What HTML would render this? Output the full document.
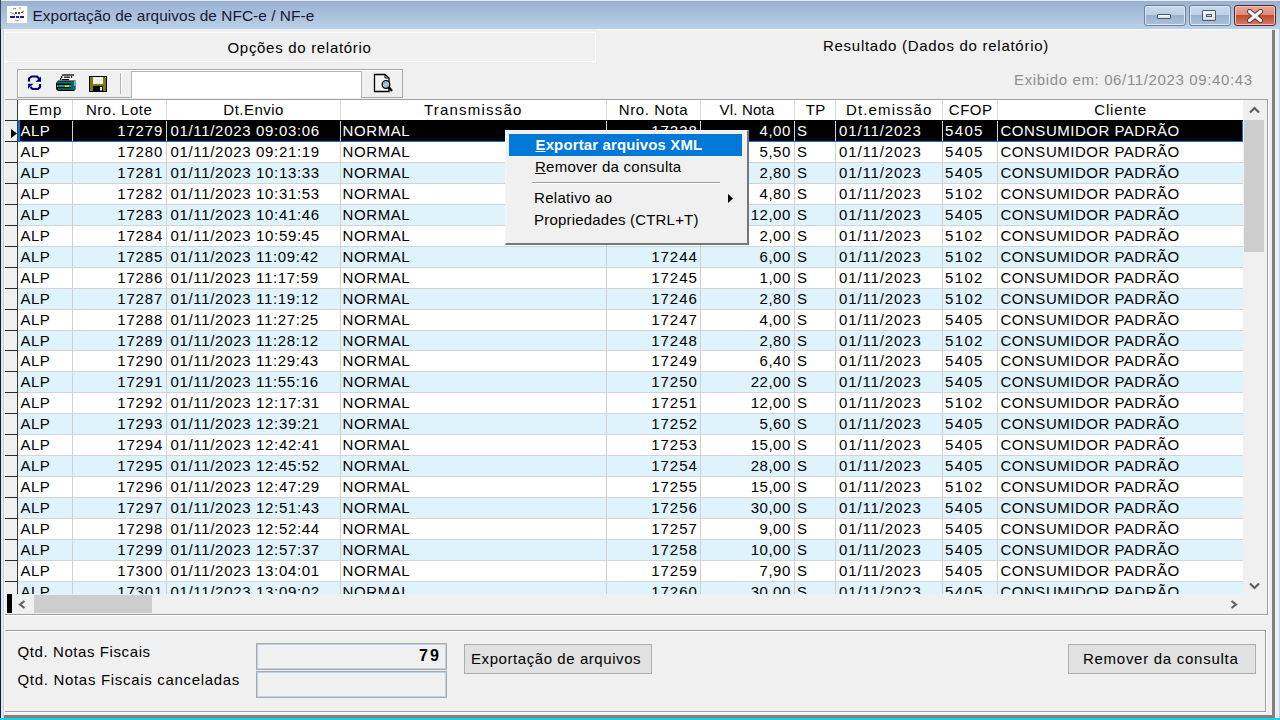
<!DOCTYPE html>
<html><head><meta charset="utf-8"><style>
*{margin:0;padding:0;box-sizing:border-box}
html,body{width:1280px;height:720px;overflow:hidden;background:#f0f0f0;font-family:"Liberation Sans",sans-serif;position:relative}
.a{position:absolute}
.t{position:absolute;white-space:nowrap;line-height:20px;color:#000}
#title{position:absolute;left:0;top:0;width:1280px;height:29px;background:linear-gradient(#97b0ce,#b9d1ea)}
.tb{position:absolute;top:5px;width:42px;height:21px;border:1px solid #6e7f93;border-radius:3px;background:linear-gradient(#c6d8ec 0,#bcd0e7 45%,#98b1cd 50%,#a9c1dc 100%);box-shadow:inset 0 0 0 1px #dfe9f5}
.tb.cl{border-color:#5a2630;background:linear-gradient(#e8a697 0,#dd8d7b 45%,#c24a2d 50%,#d57a63 100%);box-shadow:inset 0 0 0 1px #f0c0b0}
.c{position:absolute;height:20px;line-height:20px;font-size:15px;color:#000;white-space:nowrap}
.c.sel{color:#fff}
.k0{letter-spacing:0.450px;transform:translateX(-0.50px)}
.h0{letter-spacing:1.000px;transform:translateX(0.30px)}
.k1{letter-spacing:0.825px;transform:translateX(0.10px)}
.h1{letter-spacing:0.515px;transform:translateX(-0.35px)}
.k2{letter-spacing:0.672px;transform:translateX(0.50px)}
.h2{letter-spacing:0.486px;transform:translateX(0.14px)}
.k3{letter-spacing:0.600px;transform:translateX(-1.50px)}
.h3{letter-spacing:1.200px;transform:translateX(-0.25px)}
.k4{letter-spacing:0.950px;transform:translateX(0.75px)}
.h4{letter-spacing:0.575px;transform:translateX(-0.06px)}
.k5{letter-spacing:0.533px;transform:translateX(-0.17px)}
.h5{letter-spacing:0.200px;transform:translateX(-0.50px)}
.k6{letter-spacing:2.000px;transform:translateX(-1.00px)}
.h6{letter-spacing:0.300px;transform:translateX(0.60px)}
.k7{letter-spacing:0.867px;transform:translateX(-0.00px)}
.h7{letter-spacing:1.143px;transform:translateX(0.22px)}
.k8{letter-spacing:1.366px;transform:translateX(-1.00px)}
.h8{letter-spacing:0.533px;transform:translateX(0.67px)}
.k9{letter-spacing:0.511px;transform:translateX(-0.50px)}
.h9{letter-spacing:0.867px;transform:translateX(0.08px)}
.hc{position:absolute;top:100px;height:20px;line-height:20px;font-size:15px;color:#000;text-align:center;white-space:nowrap}
#gridclip{position:absolute;left:0;top:0;width:1243px;height:594px;overflow:hidden}
.hdr{position:absolute;left:18px;top:100px;width:1225px;height:20px;background:#fff}
.hsep{position:absolute;top:100px;width:1px;height:20px;background:#dadada}
.row{position:absolute;left:18px;width:1225px}
.rsep{position:absolute;left:18px;width:1225px;height:1px;background:#d4d4d4}
.isep{position:absolute;left:5px;width:13px;height:1px;background:#2a2a2a}
.vsep{position:absolute;top:121px;width:1px;height:480px;background:#d0d0d0}
.menu{position:absolute;left:505px;top:130px;width:244px;height:115px;background:#f0f0f0;border-left:1px solid #f4f4f4;border-top:1px solid #f4f4f4;border-right:2px solid #777;border-bottom:2px solid #777}
.btn{position:absolute;height:30px;background:#e1e1e1;border:1px solid #adadad}
.ed{position:absolute;left:256px;width:191px;height:27px;border:1px solid #a9a9a9;background:#f0f0f0;box-shadow:inset 0 0 0 1px #bcd2ea}
</style></head><body>
<div class="a" style="left:0;top:0;width:1px;height:720px;background:#1a1a1a"></div>
<div class="a" style="left:1px;top:0;width:2px;height:720px;background:#dfe7f0"></div>
<div class="a" style="left:3px;top:0;width:1px;height:720px;background:#b9d1ea"></div>
<div class="a" style="left:1279px;top:0;width:1px;height:720px;background:#b9d1ea"></div>
<div id="title"></div>
<div class="a" style="left:0;top:0;width:1280px;height:1px;background:#e6ebf1"></div>
<div class="a" style="left:0;top:0;width:1px;height:29px;background:#3a4a5a"></div>
<div class="a" style="left:7px;top:6px;width:20px;height:17px;background:#fff;box-shadow:1px 1px 0 #c8ccd2">
 <svg width="20" height="17" viewBox="0 0 20 17" style="position:absolute;left:0;top:0">
  <g fill="none" stroke="#555" stroke-width="0.7"><path d="M6 3 l2 -1 l1 1 M12 2 l2 0 M3 6 l2 1 l3 2 M15 6 l2 -1"/></g>
  <g fill="#444"><rect x="8" y="6" width="2" height="2"/><rect x="11" y="6" width="2" height="2"/><rect x="14" y="6" width="2" height="1"/></g>
  <g fill="#1a1aa0"><rect x="3" y="10" width="5" height="2"/><rect x="9" y="10" width="3" height="2"/><rect x="13" y="10" width="4" height="2"/></g>
  <path d="M8 14 l2 1 l2 -1" stroke="#666" stroke-width="0.7" fill="none"/>
 </svg>
</div>
<div class="t" id="ttl" style="left:32.50px;top:6px;font-size:15.4px;letter-spacing:0.054px;color:#1c1830">Exportação de arquivos de NFC-e / NF-e</div>
<div class="tb" style="left:1144px"><div class="a" style="left:12px;top:8px;width:14px;height:5px;background:linear-gradient(#fff,#d8d8d8);border:1px solid #4d5866;border-radius:1px"></div></div>
<div class="tb" style="left:1189px"><div class="a" style="left:12px;top:4px;width:14px;height:11px;background:linear-gradient(#fff,#d8d8d8);border:1px solid #4d5866;border-radius:1px"><div class="a" style="left:3px;top:3px;width:6px;height:3px;border:1px solid #4d5866;background:#c4d6ec"></div></div></div>
<div class="tb cl" style="left:1234px"><svg class="a" style="left:11px;top:3px" width="18" height="14" viewBox="0 0 18 14"><path d="M3.5 2.5 L14.5 11.5 M14.5 2.5 L3.5 11.5" stroke="#4a3a40" stroke-width="5" stroke-linecap="round"/><path d="M3.5 2.5 L14.5 11.5 M14.5 2.5 L3.5 11.5" stroke="#f4f4f4" stroke-width="3.2" stroke-linecap="round"/></svg></div>

<div class="a" style="left:4px;top:32px;width:592px;height:1px;background:#fff"></div>
<div class="a" style="left:595px;top:32px;width:1px;height:30px;background:#fff"></div>
<div class="a" style="left:4px;top:61px;width:592px;height:1px;background:#fff"></div>
<div class="a" style="left:597px;top:29px;width:676px;height:1px;background:#fff"></div>
<div class="a" style="left:1272px;top:30px;width:3px;height:688px;background:#808080"></div>
<div class="a" style="left:4px;top:715px;width:1271px;height:3px;background:#808080"></div>
<div class="a" style="left:4px;top:29px;width:1px;height:686px;background:#fff"></div>
<div class="a" style="left:0;top:718px;width:1280px;height:2px;background:#22cbe0"></div>
<div class="t" id="tab1" style="left:227.50px;top:38px;font-size:15px;letter-spacing:0.693px;">Opções do relatório</div>
<div class="t" id="tab2" style="left:823.00px;top:36px;font-size:15px;letter-spacing:0.724px;">Resultado (Dados do relatório)</div>

<div class="a" style="left:17px;top:69px;width:386px;height:29px;border:1px solid #a9a9a9;background:#f0f0f0;box-shadow:inset 1px 1px 0 #fff"></div>
<svg class="a" style="left:24px;top:71px" width="22" height="22" viewBox="0 0 22 22">
 <polyline points="5,10.5 5,7.5 7.5,5.5 13,5.5 15,7.5" fill="none" stroke="#000080" stroke-width="2.2" stroke-linejoin="round"/>
 <path d="M11.5 10.7 L17 10.7 L17 5.5 Z" fill="#000080"/>
 <polyline points="16,13 16,16 14,18 8.5,18 6.5,16" fill="none" stroke="#000080" stroke-width="2.2" stroke-linejoin="round"/>
 <path d="M4 12.7 L9.5 12.7 L4 17.8 Z" fill="#000080"/>
</svg>
<svg class="a" style="left:55px;top:73px" width="22" height="19" viewBox="0 0 22 19">
 <rect x="7" y="1" width="12" height="2" fill="#5a5a5a"/>
 <path d="M6.5 3 H18 V7.5 H4 Z" fill="#fff"/>
 <rect x="6" y="3" width="1.3" height="2" fill="#000"/>
 <rect x="5" y="5" width="1.3" height="2" fill="#000"/>
 <rect x="9" y="3.6" width="6" height="1.2" fill="#000"/>
 <rect x="7" y="6" width="7" height="1.2" fill="#000"/>
 <rect x="16" y="3" width="1.2" height="2" fill="#222"/>
 <path d="M2 9 L3 7.5 H20.5 V16.5 L19 18 H3 L1 16 V10 Z" fill="#000"/>
 <rect x="2" y="8.5" width="14" height="2" fill="#007575"/>
 <rect x="2" y="12" width="14" height="2" fill="#00a0a0"/>
 <rect x="10" y="12.5" width="4" height="1.5" fill="#e8e800"/>
 <rect x="3" y="15" width="13" height="2" fill="#005c5c"/>
 <rect x="16" y="8" width="4" height="9" fill="#006a6a"/>
 <rect x="19" y="8" width="1.5" height="5" fill="#5cc8c8"/>
</svg>
<svg class="a" style="left:89px;top:76px" width="18" height="16" viewBox="0 0 18 16">
 <rect x="0.5" y="0.5" width="17" height="15" fill="#7d7d00" stroke="#000" stroke-width="1"/>
 <rect x="4" y="1" width="10" height="7" fill="#efefef"/>
 <rect x="4" y="10" width="10" height="5.5" fill="#000"/>
 <rect x="11" y="11" width="2" height="3.5" fill="#e8e8e8"/>
 <rect x="16" y="1" width="1" height="1" fill="#fff"/>
</svg>
<div class="a" style="left:120px;top:73px;width:1px;height:21px;background:#b4b4b4"></div>
<div class="a" style="left:121px;top:73px;width:1px;height:21px;background:#fff"></div>
<div class="a" style="left:131px;top:71px;width:231px;height:27px;background:#fff;border:1px solid #b4b4b4;border-bottom:none"></div>
<svg class="a" style="left:373px;top:73px" width="22" height="20" viewBox="0 0 22 20">
 <path d="M1.5 1.5 H12 L16 5 V18.5 H1.5 Z" fill="#f4f4f4" stroke="#000" stroke-width="1.3"/>
 <path d="M12 1.5 V5 H16" fill="none" stroke="#000" stroke-width="1"/>
 <circle cx="13" cy="11.5" r="3.8" fill="#c0c0c0" stroke="#000" stroke-width="1.3"/>
 <path d="M11 10 l2 -1.5 M13.5 13.5 l1 -1" stroke="#00e0f0" stroke-width="1.6"/>
 <path d="M15.5 14 L19 18" stroke="#000" stroke-width="2.4"/>
</svg>
<div class="t" id="exib" style="left:1014.00px;top:70px;font-size:15px;letter-spacing:0.633px;color:#8e8e8e">Exibido em: 06/11/2023 09:40:43</div>

<div class="a" style="left:5px;top:99px;width:1263px;height:516px;border:1px solid #a0a0a0;border-left:none;background:#f0f0f0;box-shadow:1px 1px 0 #fff"></div>
<div class="a" style="left:5px;top:100px;width:13px;height:494px;background:#f0f0f0"></div>
<div class="a" style="left:17px;top:100px;width:1px;height:494px;background:#3a3a3a"></div>
<div class="a" style="left:5px;top:120px;width:13px;height:1px;background:#2a2a2a"></div>
<div id="gridclip">
<div class="hdr"></div>
<div class="hc h0" id="h0" style="left:18px;width:54px">Emp</div>
<div class="hc h1" id="h1" style="left:73px;width:93px">Nro. Lote</div>
<div class="hc h2" id="h2" style="left:167px;width:173px">Dt.Envio</div>
<div class="hc h3" id="h3" style="left:341px;width:265px">Transmissão</div>
<div class="hc h4" id="h4" style="left:607px;width:93px">Nro. Nota</div>
<div class="hc h5" id="h5" style="left:701px;width:93px">Vl. Nota</div>
<div class="hc h6" id="h6" style="left:795px;width:40px">TP</div>
<div class="hc h7" id="h7" style="left:836px;width:106px">Dt.emissão</div>
<div class="hc h8" id="h8" style="left:943px;width:54px">CFOP</div>
<div class="hc h9" id="h9" style="left:998px;width:245px">Cliente</div>
<div class="hsep" style="left:72px"></div>
<div class="hsep" style="left:166px"></div>
<div class="hsep" style="left:340px"></div>
<div class="hsep" style="left:606px"></div>
<div class="hsep" style="left:700px"></div>
<div class="hsep" style="left:794px"></div>
<div class="hsep" style="left:835px"></div>
<div class="hsep" style="left:942px"></div>
<div class="hsep" style="left:997px"></div>
<div class="row" style="top:120px;height:21px;background:#000"></div>
<div class="isep" style="top:141px"></div>
<div class="c k0 sel" style="left:21px;top:121px">ALP</div>
<div class="c k1 sel" style="left:73px;top:121px;width:90px;text-align:right">17279</div>
<div class="c k2 sel" style="left:170px;top:121px">01/11/2023 09:03:06</div>
<div class="c k3 sel" style="left:344px;top:121px">NORMAL</div>
<div class="c k4 sel" style="left:607px;top:121px;width:90px;text-align:right">17238</div>
<div class="c k5 sel" style="left:701px;top:121px;width:90px;text-align:right">4,00</div>
<div class="c k6 sel" style="left:798px;top:121px">S</div>
<div class="c k7 sel" style="left:839px;top:121px">01/11/2023</div>
<div class="c k8 sel" style="left:946px;top:121px">5405</div>
<div class="c k9 sel" style="left:1001px;top:121px">CONSUMIDOR PADRÃO</div>
<div class="row" style="top:142px;height:20px;background:#ffffff"></div>
<div class="rsep" style="top:162px"></div>
<div class="isep" style="top:162px"></div>
<div class="c k0" id="r1c0" style="left:21px;top:142px">ALP</div>
<div class="c k1" id="r1c1" style="left:73px;top:142px;width:90px;text-align:right">17280</div>
<div class="c k2" id="r1c2" style="left:170px;top:142px">01/11/2023 09:21:19</div>
<div class="c k3" id="r1c3" style="left:344px;top:142px">NORMAL</div>
<div class="c k4" id="r1c4" style="left:607px;top:142px;width:90px;text-align:right">17239</div>
<div class="c k5" id="r1c5" style="left:701px;top:142px;width:90px;text-align:right">5,50</div>
<div class="c k6" id="r1c6" style="left:798px;top:142px">S</div>
<div class="c k7" id="r1c7" style="left:839px;top:142px">01/11/2023</div>
<div class="c k8" id="r1c8" style="left:946px;top:142px">5405</div>
<div class="c k9" id="r1c9" style="left:1001px;top:142px">CONSUMIDOR PADRÃO</div>
<div class="row" style="top:163px;height:20px;background:#dff3fd"></div>
<div class="rsep" style="top:183px"></div>
<div class="isep" style="top:183px"></div>
<div class="c k0" style="left:21px;top:163px">ALP</div>
<div class="c k1" style="left:73px;top:163px;width:90px;text-align:right">17281</div>
<div class="c k2" style="left:170px;top:163px">01/11/2023 10:13:33</div>
<div class="c k3" style="left:344px;top:163px">NORMAL</div>
<div class="c k4" style="left:607px;top:163px;width:90px;text-align:right">17240</div>
<div class="c k5" style="left:701px;top:163px;width:90px;text-align:right">2,80</div>
<div class="c k6" style="left:798px;top:163px">S</div>
<div class="c k7" style="left:839px;top:163px">01/11/2023</div>
<div class="c k8" style="left:946px;top:163px">5405</div>
<div class="c k9" style="left:1001px;top:163px">CONSUMIDOR PADRÃO</div>
<div class="row" style="top:184px;height:20px;background:#ffffff"></div>
<div class="rsep" style="top:204px"></div>
<div class="isep" style="top:204px"></div>
<div class="c k0" style="left:21px;top:184px">ALP</div>
<div class="c k1" style="left:73px;top:184px;width:90px;text-align:right">17282</div>
<div class="c k2" style="left:170px;top:184px">01/11/2023 10:31:53</div>
<div class="c k3" style="left:344px;top:184px">NORMAL</div>
<div class="c k4" style="left:607px;top:184px;width:90px;text-align:right">17241</div>
<div class="c k5" style="left:701px;top:184px;width:90px;text-align:right">4,80</div>
<div class="c k6" style="left:798px;top:184px">S</div>
<div class="c k7" style="left:839px;top:184px">01/11/2023</div>
<div class="c k8" style="left:946px;top:184px">5102</div>
<div class="c k9" style="left:1001px;top:184px">CONSUMIDOR PADRÃO</div>
<div class="row" style="top:205px;height:20px;background:#dff3fd"></div>
<div class="rsep" style="top:225px"></div>
<div class="isep" style="top:225px"></div>
<div class="c k0" style="left:21px;top:205px">ALP</div>
<div class="c k1" style="left:73px;top:205px;width:90px;text-align:right">17283</div>
<div class="c k2" style="left:170px;top:205px">01/11/2023 10:41:46</div>
<div class="c k3" style="left:344px;top:205px">NORMAL</div>
<div class="c k4" style="left:607px;top:205px;width:90px;text-align:right">17242</div>
<div class="c k5" style="left:701px;top:205px;width:90px;text-align:right">12,00</div>
<div class="c k6" style="left:798px;top:205px">S</div>
<div class="c k7" style="left:839px;top:205px">01/11/2023</div>
<div class="c k8" style="left:946px;top:205px">5405</div>
<div class="c k9" style="left:1001px;top:205px">CONSUMIDOR PADRÃO</div>
<div class="row" style="top:226px;height:20px;background:#ffffff"></div>
<div class="rsep" style="top:246px"></div>
<div class="isep" style="top:246px"></div>
<div class="c k0" style="left:21px;top:226px">ALP</div>
<div class="c k1" style="left:73px;top:226px;width:90px;text-align:right">17284</div>
<div class="c k2" style="left:170px;top:226px">01/11/2023 10:59:45</div>
<div class="c k3" style="left:344px;top:226px">NORMAL</div>
<div class="c k4" style="left:607px;top:226px;width:90px;text-align:right">17243</div>
<div class="c k5" style="left:701px;top:226px;width:90px;text-align:right">2,00</div>
<div class="c k6" style="left:798px;top:226px">S</div>
<div class="c k7" style="left:839px;top:226px">01/11/2023</div>
<div class="c k8" style="left:946px;top:226px">5102</div>
<div class="c k9" style="left:1001px;top:226px">CONSUMIDOR PADRÃO</div>
<div class="row" style="top:247px;height:20px;background:#dff3fd"></div>
<div class="rsep" style="top:267px"></div>
<div class="isep" style="top:267px"></div>
<div class="c k0" style="left:21px;top:247px">ALP</div>
<div class="c k1" style="left:73px;top:247px;width:90px;text-align:right">17285</div>
<div class="c k2" style="left:170px;top:247px">01/11/2023 11:09:42</div>
<div class="c k3" style="left:344px;top:247px">NORMAL</div>
<div class="c k4" style="left:607px;top:247px;width:90px;text-align:right">17244</div>
<div class="c k5" style="left:701px;top:247px;width:90px;text-align:right">6,00</div>
<div class="c k6" style="left:798px;top:247px">S</div>
<div class="c k7" style="left:839px;top:247px">01/11/2023</div>
<div class="c k8" style="left:946px;top:247px">5102</div>
<div class="c k9" style="left:1001px;top:247px">CONSUMIDOR PADRÃO</div>
<div class="row" style="top:268px;height:20px;background:#ffffff"></div>
<div class="rsep" style="top:288px"></div>
<div class="isep" style="top:288px"></div>
<div class="c k0" id="r7c0" style="left:21px;top:268px">ALP</div>
<div class="c k1" id="r7c1" style="left:73px;top:268px;width:90px;text-align:right">17286</div>
<div class="c k2" id="r7c2" style="left:170px;top:268px">01/11/2023 11:17:59</div>
<div class="c k3" id="r7c3" style="left:344px;top:268px">NORMAL</div>
<div class="c k4" id="r7c4" style="left:607px;top:268px;width:90px;text-align:right">17245</div>
<div class="c k5" id="r7c5" style="left:701px;top:268px;width:90px;text-align:right">1,00</div>
<div class="c k6" id="r7c6" style="left:798px;top:268px">S</div>
<div class="c k7" id="r7c7" style="left:839px;top:268px">01/11/2023</div>
<div class="c k8" id="r7c8" style="left:946px;top:268px">5102</div>
<div class="c k9" id="r7c9" style="left:1001px;top:268px">CONSUMIDOR PADRÃO</div>
<div class="row" style="top:289px;height:20px;background:#dff3fd"></div>
<div class="rsep" style="top:309px"></div>
<div class="isep" style="top:309px"></div>
<div class="c k0" style="left:21px;top:289px">ALP</div>
<div class="c k1" style="left:73px;top:289px;width:90px;text-align:right">17287</div>
<div class="c k2" style="left:170px;top:289px">01/11/2023 11:19:12</div>
<div class="c k3" style="left:344px;top:289px">NORMAL</div>
<div class="c k4" style="left:607px;top:289px;width:90px;text-align:right">17246</div>
<div class="c k5" style="left:701px;top:289px;width:90px;text-align:right">2,80</div>
<div class="c k6" style="left:798px;top:289px">S</div>
<div class="c k7" style="left:839px;top:289px">01/11/2023</div>
<div class="c k8" style="left:946px;top:289px">5102</div>
<div class="c k9" style="left:1001px;top:289px">CONSUMIDOR PADRÃO</div>
<div class="row" style="top:310px;height:20px;background:#ffffff"></div>
<div class="rsep" style="top:330px"></div>
<div class="isep" style="top:330px"></div>
<div class="c k0" style="left:21px;top:310px">ALP</div>
<div class="c k1" style="left:73px;top:310px;width:90px;text-align:right">17288</div>
<div class="c k2" style="left:170px;top:310px">01/11/2023 11:27:25</div>
<div class="c k3" style="left:344px;top:310px">NORMAL</div>
<div class="c k4" style="left:607px;top:310px;width:90px;text-align:right">17247</div>
<div class="c k5" style="left:701px;top:310px;width:90px;text-align:right">4,00</div>
<div class="c k6" style="left:798px;top:310px">S</div>
<div class="c k7" style="left:839px;top:310px">01/11/2023</div>
<div class="c k8" style="left:946px;top:310px">5405</div>
<div class="c k9" style="left:1001px;top:310px">CONSUMIDOR PADRÃO</div>
<div class="row" style="top:331px;height:19px;background:#dff3fd"></div>
<div class="rsep" style="top:350px"></div>
<div class="isep" style="top:350px"></div>
<div class="c k0" style="left:21px;top:331px">ALP</div>
<div class="c k1" style="left:73px;top:331px;width:90px;text-align:right">17289</div>
<div class="c k2" style="left:170px;top:331px">01/11/2023 11:28:12</div>
<div class="c k3" style="left:344px;top:331px">NORMAL</div>
<div class="c k4" style="left:607px;top:331px;width:90px;text-align:right">17248</div>
<div class="c k5" style="left:701px;top:331px;width:90px;text-align:right">2,80</div>
<div class="c k6" style="left:798px;top:331px">S</div>
<div class="c k7" style="left:839px;top:331px">01/11/2023</div>
<div class="c k8" style="left:946px;top:331px">5102</div>
<div class="c k9" style="left:1001px;top:331px">CONSUMIDOR PADRÃO</div>
<div class="row" style="top:351px;height:20px;background:#ffffff"></div>
<div class="rsep" style="top:371px"></div>
<div class="isep" style="top:371px"></div>
<div class="c k0" style="left:21px;top:351px">ALP</div>
<div class="c k1" style="left:73px;top:351px;width:90px;text-align:right">17290</div>
<div class="c k2" style="left:170px;top:351px">01/11/2023 11:29:43</div>
<div class="c k3" style="left:344px;top:351px">NORMAL</div>
<div class="c k4" style="left:607px;top:351px;width:90px;text-align:right">17249</div>
<div class="c k5" style="left:701px;top:351px;width:90px;text-align:right">6,40</div>
<div class="c k6" style="left:798px;top:351px">S</div>
<div class="c k7" style="left:839px;top:351px">01/11/2023</div>
<div class="c k8" style="left:946px;top:351px">5405</div>
<div class="c k9" style="left:1001px;top:351px">CONSUMIDOR PADRÃO</div>
<div class="row" style="top:372px;height:20px;background:#dff3fd"></div>
<div class="rsep" style="top:392px"></div>
<div class="isep" style="top:392px"></div>
<div class="c k0" style="left:21px;top:372px">ALP</div>
<div class="c k1" style="left:73px;top:372px;width:90px;text-align:right">17291</div>
<div class="c k2" style="left:170px;top:372px">01/11/2023 11:55:16</div>
<div class="c k3" style="left:344px;top:372px">NORMAL</div>
<div class="c k4" style="left:607px;top:372px;width:90px;text-align:right">17250</div>
<div class="c k5" style="left:701px;top:372px;width:90px;text-align:right">22,00</div>
<div class="c k6" style="left:798px;top:372px">S</div>
<div class="c k7" style="left:839px;top:372px">01/11/2023</div>
<div class="c k8" style="left:946px;top:372px">5405</div>
<div class="c k9" style="left:1001px;top:372px">CONSUMIDOR PADRÃO</div>
<div class="row" style="top:393px;height:20px;background:#ffffff"></div>
<div class="rsep" style="top:413px"></div>
<div class="isep" style="top:413px"></div>
<div class="c k0" style="left:21px;top:393px">ALP</div>
<div class="c k1" style="left:73px;top:393px;width:90px;text-align:right">17292</div>
<div class="c k2" style="left:170px;top:393px">01/11/2023 12:17:31</div>
<div class="c k3" style="left:344px;top:393px">NORMAL</div>
<div class="c k4" style="left:607px;top:393px;width:90px;text-align:right">17251</div>
<div class="c k5" style="left:701px;top:393px;width:90px;text-align:right">12,00</div>
<div class="c k6" style="left:798px;top:393px">S</div>
<div class="c k7" style="left:839px;top:393px">01/11/2023</div>
<div class="c k8" style="left:946px;top:393px">5102</div>
<div class="c k9" style="left:1001px;top:393px">CONSUMIDOR PADRÃO</div>
<div class="row" style="top:414px;height:20px;background:#dff3fd"></div>
<div class="rsep" style="top:434px"></div>
<div class="isep" style="top:434px"></div>
<div class="c k0" style="left:21px;top:414px">ALP</div>
<div class="c k1" style="left:73px;top:414px;width:90px;text-align:right">17293</div>
<div class="c k2" style="left:170px;top:414px">01/11/2023 12:39:21</div>
<div class="c k3" style="left:344px;top:414px">NORMAL</div>
<div class="c k4" style="left:607px;top:414px;width:90px;text-align:right">17252</div>
<div class="c k5" style="left:701px;top:414px;width:90px;text-align:right">5,60</div>
<div class="c k6" style="left:798px;top:414px">S</div>
<div class="c k7" style="left:839px;top:414px">01/11/2023</div>
<div class="c k8" style="left:946px;top:414px">5405</div>
<div class="c k9" style="left:1001px;top:414px">CONSUMIDOR PADRÃO</div>
<div class="row" style="top:435px;height:20px;background:#ffffff"></div>
<div class="rsep" style="top:455px"></div>
<div class="isep" style="top:455px"></div>
<div class="c k0" style="left:21px;top:435px">ALP</div>
<div class="c k1" style="left:73px;top:435px;width:90px;text-align:right">17294</div>
<div class="c k2" style="left:170px;top:435px">01/11/2023 12:42:41</div>
<div class="c k3" style="left:344px;top:435px">NORMAL</div>
<div class="c k4" style="left:607px;top:435px;width:90px;text-align:right">17253</div>
<div class="c k5" style="left:701px;top:435px;width:90px;text-align:right">15,00</div>
<div class="c k6" style="left:798px;top:435px">S</div>
<div class="c k7" style="left:839px;top:435px">01/11/2023</div>
<div class="c k8" style="left:946px;top:435px">5405</div>
<div class="c k9" style="left:1001px;top:435px">CONSUMIDOR PADRÃO</div>
<div class="row" style="top:456px;height:20px;background:#dff3fd"></div>
<div class="rsep" style="top:476px"></div>
<div class="isep" style="top:476px"></div>
<div class="c k0" style="left:21px;top:456px">ALP</div>
<div class="c k1" style="left:73px;top:456px;width:90px;text-align:right">17295</div>
<div class="c k2" style="left:170px;top:456px">01/11/2023 12:45:52</div>
<div class="c k3" style="left:344px;top:456px">NORMAL</div>
<div class="c k4" style="left:607px;top:456px;width:90px;text-align:right">17254</div>
<div class="c k5" style="left:701px;top:456px;width:90px;text-align:right">28,00</div>
<div class="c k6" style="left:798px;top:456px">S</div>
<div class="c k7" style="left:839px;top:456px">01/11/2023</div>
<div class="c k8" style="left:946px;top:456px">5405</div>
<div class="c k9" style="left:1001px;top:456px">CONSUMIDOR PADRÃO</div>
<div class="row" style="top:477px;height:20px;background:#ffffff"></div>
<div class="rsep" style="top:497px"></div>
<div class="isep" style="top:497px"></div>
<div class="c k0" style="left:21px;top:477px">ALP</div>
<div class="c k1" style="left:73px;top:477px;width:90px;text-align:right">17296</div>
<div class="c k2" style="left:170px;top:477px">01/11/2023 12:47:29</div>
<div class="c k3" style="left:344px;top:477px">NORMAL</div>
<div class="c k4" style="left:607px;top:477px;width:90px;text-align:right">17255</div>
<div class="c k5" style="left:701px;top:477px;width:90px;text-align:right">15,00</div>
<div class="c k6" style="left:798px;top:477px">S</div>
<div class="c k7" style="left:839px;top:477px">01/11/2023</div>
<div class="c k8" style="left:946px;top:477px">5102</div>
<div class="c k9" style="left:1001px;top:477px">CONSUMIDOR PADRÃO</div>
<div class="row" style="top:498px;height:20px;background:#dff3fd"></div>
<div class="rsep" style="top:518px"></div>
<div class="isep" style="top:518px"></div>
<div class="c k0" style="left:21px;top:498px">ALP</div>
<div class="c k1" style="left:73px;top:498px;width:90px;text-align:right">17297</div>
<div class="c k2" style="left:170px;top:498px">01/11/2023 12:51:43</div>
<div class="c k3" style="left:344px;top:498px">NORMAL</div>
<div class="c k4" style="left:607px;top:498px;width:90px;text-align:right">17256</div>
<div class="c k5" style="left:701px;top:498px;width:90px;text-align:right">30,00</div>
<div class="c k6" style="left:798px;top:498px">S</div>
<div class="c k7" style="left:839px;top:498px">01/11/2023</div>
<div class="c k8" style="left:946px;top:498px">5405</div>
<div class="c k9" style="left:1001px;top:498px">CONSUMIDOR PADRÃO</div>
<div class="row" style="top:519px;height:20px;background:#ffffff"></div>
<div class="rsep" style="top:539px"></div>
<div class="isep" style="top:539px"></div>
<div class="c k0" style="left:21px;top:519px">ALP</div>
<div class="c k1" style="left:73px;top:519px;width:90px;text-align:right">17298</div>
<div class="c k2" style="left:170px;top:519px">01/11/2023 12:52:44</div>
<div class="c k3" style="left:344px;top:519px">NORMAL</div>
<div class="c k4" style="left:607px;top:519px;width:90px;text-align:right">17257</div>
<div class="c k5" style="left:701px;top:519px;width:90px;text-align:right">9,00</div>
<div class="c k6" style="left:798px;top:519px">S</div>
<div class="c k7" style="left:839px;top:519px">01/11/2023</div>
<div class="c k8" style="left:946px;top:519px">5405</div>
<div class="c k9" style="left:1001px;top:519px">CONSUMIDOR PADRÃO</div>
<div class="row" style="top:540px;height:20px;background:#dff3fd"></div>
<div class="rsep" style="top:560px"></div>
<div class="isep" style="top:560px"></div>
<div class="c k0" style="left:21px;top:540px">ALP</div>
<div class="c k1" style="left:73px;top:540px;width:90px;text-align:right">17299</div>
<div class="c k2" style="left:170px;top:540px">01/11/2023 12:57:37</div>
<div class="c k3" style="left:344px;top:540px">NORMAL</div>
<div class="c k4" style="left:607px;top:540px;width:90px;text-align:right">17258</div>
<div class="c k5" style="left:701px;top:540px;width:90px;text-align:right">10,00</div>
<div class="c k6" style="left:798px;top:540px">S</div>
<div class="c k7" style="left:839px;top:540px">01/11/2023</div>
<div class="c k8" style="left:946px;top:540px">5405</div>
<div class="c k9" style="left:1001px;top:540px">CONSUMIDOR PADRÃO</div>
<div class="row" style="top:561px;height:20px;background:#ffffff"></div>
<div class="rsep" style="top:581px"></div>
<div class="isep" style="top:581px"></div>
<div class="c k0" style="left:21px;top:561px">ALP</div>
<div class="c k1" style="left:73px;top:561px;width:90px;text-align:right">17300</div>
<div class="c k2" style="left:170px;top:561px">01/11/2023 13:04:01</div>
<div class="c k3" style="left:344px;top:561px">NORMAL</div>
<div class="c k4" style="left:607px;top:561px;width:90px;text-align:right">17259</div>
<div class="c k5" style="left:701px;top:561px;width:90px;text-align:right">7,90</div>
<div class="c k6" style="left:798px;top:561px">S</div>
<div class="c k7" style="left:839px;top:561px">01/11/2023</div>
<div class="c k8" style="left:946px;top:561px">5405</div>
<div class="c k9" style="left:1001px;top:561px">CONSUMIDOR PADRÃO</div>
<div class="row" style="top:582px;height:20px;background:#dff3fd"></div>
<div class="rsep" style="top:602px"></div>
<div class="isep" style="top:602px"></div>
<div class="c k0" style="left:21px;top:582px">ALP</div>
<div class="c k1" style="left:73px;top:582px;width:90px;text-align:right">17301</div>
<div class="c k2" style="left:170px;top:582px">01/11/2023 13:09:02</div>
<div class="c k3" style="left:344px;top:582px">NORMAL</div>
<div class="c k4" style="left:607px;top:582px;width:90px;text-align:right">17260</div>
<div class="c k5" style="left:701px;top:582px;width:90px;text-align:right">30,00</div>
<div class="c k6" style="left:798px;top:582px">S</div>
<div class="c k7" style="left:839px;top:582px">01/11/2023</div>
<div class="c k8" style="left:946px;top:582px">5405</div>
<div class="c k9" style="left:1001px;top:582px">CONSUMIDOR PADRÃO</div>
<div class="vsep" style="left:72px"></div>
<div class="vsep" style="left:166px"></div>
<div class="vsep" style="left:340px"></div>
<div class="vsep" style="left:606px"></div>
<div class="vsep" style="left:700px"></div>
<div class="vsep" style="left:794px"></div>
<div class="vsep" style="left:835px"></div>
<div class="vsep" style="left:942px"></div>
<div class="vsep" style="left:997px"></div>
<div class="a" style="left:18px;top:120px;width:2px;height:22px;background:#0a74d8"></div>
<div class="a" style="left:18px;top:141px;width:1225px;height:1px;background:#0a74d8"></div>
<div class="a" style="left:1242px;top:121px;width:1px;height:21px;background:#0a74d8"></div>
</div>
<svg class="a" style="left:11px;top:129px" width="6" height="9" viewBox="0 0 6 9"><path d="M0 0 L6 4.5 L0 9 Z" fill="#000"/></svg>
<div class="a" style="left:1243px;top:100px;width:24px;height:494px;background:#f0f0f0"></div>
<div class="a" style="left:1244px;top:120px;width:20px;height:132px;background:#cdcdcd"></div>
<svg class="a" style="left:1249px;top:106px" width="11" height="8" viewBox="0 0 11 8"><path d="M1 6.5 L5.5 2 L10 6.5" fill="none" stroke="#606060" stroke-width="2.2"/></svg>
<svg class="a" style="left:1249px;top:582px" width="11" height="8" viewBox="0 0 11 8"><path d="M1 1.5 L5.5 6 L10 1.5" fill="none" stroke="#606060" stroke-width="2.2"/></svg>
<div class="a" style="left:5px;top:594px;width:1262px;height:20px;background:#f0f0f0"></div>
<div class="a" style="left:7px;top:594px;width:5px;height:19px;background:#000"></div>
<div class="a" style="left:34px;top:595px;width:118px;height:18px;background:#cdcdcd"></div>
<svg class="a" style="left:18px;top:600px" width="8" height="9" viewBox="0 0 8 9"><path d="M6.5 1 L2 4.5 L6.5 8" fill="none" stroke="#606060" stroke-width="2.2"/></svg>
<svg class="a" style="left:1230px;top:600px" width="8" height="9" viewBox="0 0 8 9"><path d="M1.5 1 L6 4.5 L1.5 8" fill="none" stroke="#606060" stroke-width="2.2"/></svg>

<div class="a" style="left:5px;top:630px;width:1261px;height:82px;border:1px solid #a0a0a0;border-left:none;box-shadow:inset 0 1px 0 #fff, 1px 1px 0 #fff"></div>
<div class="t" id="lbl1" style="left:17.50px;top:642px;font-size:15px;letter-spacing:0.589px;">Qtd. Notas Fiscais</div>
<div class="t" id="lbl2" style="left:17.50px;top:670px;font-size:15px;letter-spacing:0.688px;">Qtd. Notas Fiscais canceladas</div>
<div class="ed" style="top:643px"></div>
<div class="ed" style="top:671px"></div>
<div class="t" id="n79" style="left:419.00px;top:646px;font-size:16px;letter-spacing:0.000px;font-weight:bold;letter-spacing:2px">79</div>
<div class="btn" style="left:464px;top:644px;width:188px"></div>
<div class="btn" style="left:1068px;top:644px;width:188px"></div>
<div class="t" id="btn1" style="left:471.00px;top:649px;font-size:15px;letter-spacing:0.570px;">Exportação de arquivos</div>
<div class="t" id="btn2" style="left:1083.00px;top:649px;font-size:15px;letter-spacing:0.722px;">Remover da consulta</div>

<div class="menu">
 <div class="a" style="left:3px;top:3px;width:233px;height:22px;background:#0078d7"></div>
 <div class="a" style="left:26px;top:51px;width:188px;height:1px;background:#a0a0a0"></div>
 <div class="a" style="left:26px;top:52px;width:188px;height:1px;background:#fff"></div>
 <svg class="a" style="left:222px;top:63px" width="5" height="9" viewBox="0 0 5 9"><path d="M0 0 L5 4.5 L0 9 Z" fill="#000"/></svg>
</div>
<div class="t" id="m1" style="left:535.50px;top:135px;font-size:15px;letter-spacing:0.125px;color:#fff;font-weight:bold"><u>E</u>xportar arquivos XML</div>
<div class="t" id="m2" style="left:535.00px;top:157px;font-size:15px;letter-spacing:0.248px;"><u>R</u>emover da consulta</div>
<div class="t" id="m3" style="left:534.00px;top:188px;font-size:15px;letter-spacing:0.300px;">Relativo ao</div>
<div class="t" id="m4" style="left:534.00px;top:210px;font-size:15px;letter-spacing:0.200px;">Propriedades (CTRL+T)</div>
</body></html>
